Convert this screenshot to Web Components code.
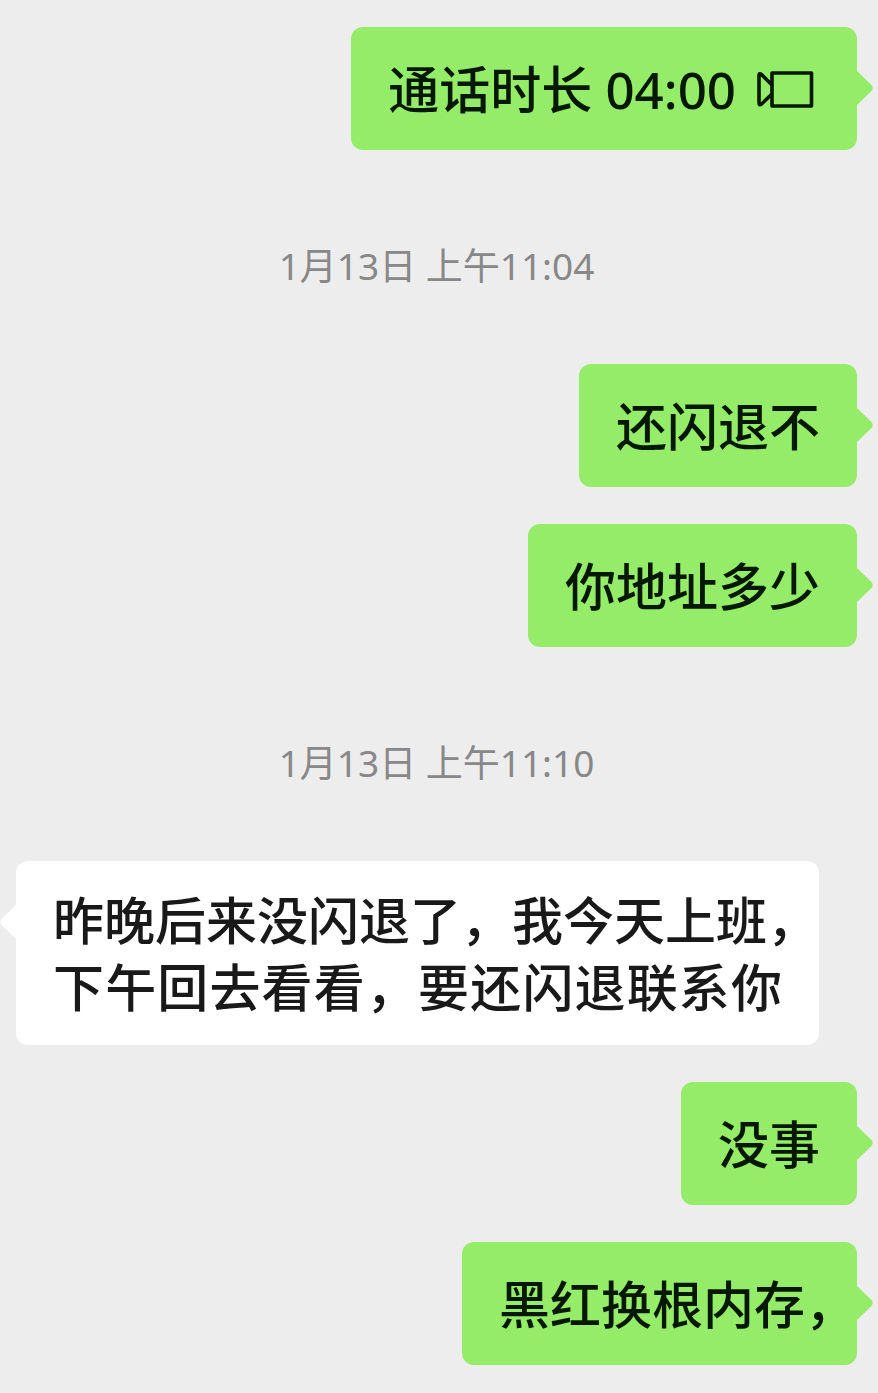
<!DOCTYPE html>
<html lang="zh-CN">
<head>
<meta charset="utf-8">
<meta name="viewport" content="width=device-width, initial-scale=1">
<title>聊天</title>
<style>
  body {
    margin: 0;
    background: #ededed;
    font-family: "Noto Sans", "Noto Sans CJK SC", sans-serif;
  }
  /* a comma that closes a line takes only the room of its ink */
  .line-end {
    display: inline-block;
    width: 15px;
    white-space: nowrap;
    text-align: left;
    text-align-last: left;
  }
</style>
</head>
<body>
<chat-log>
  <chat-message side="right">通话时长 04:00<video-icon></video-icon></chat-message>
  <chat-time>1月13日 上午11:04</chat-time>
  <chat-message side="right">还闪退不</chat-message>
  <chat-message side="right">你地址多少</chat-message>
  <chat-time>1月13日 上午11:10</chat-time>
  <chat-message side="left">昨晚后来没闪退了，我今天上班<span class="line-end">，</span><br>下午回去看看，要还闪退联系你</chat-message>
  <chat-message side="right">没事</chat-message>
  <chat-message side="right">黑红换根内存<span class="line-end">，</span></chat-message>
</chat-log>

<script>
class ChatLog extends HTMLElement {
  constructor() {
    super();
    this.attachShadow({ mode: 'open' });
  }

  connectedCallback() {
    this.shadowRoot.innerHTML = `
      <style>
        :host {
          display: flex;
          flex-direction: column;
          gap: 37px;
          box-sizing: border-box;
          min-height: 100vh;
          padding: 27px 21px 28px 16px;
        }
      </style>
      <slot></slot>
    `;
  }
}

class ChatTime extends HTMLElement {
  constructor() {
    super();
    this.attachShadow({ mode: 'open' });
  }

  connectedCallback() {
    this.shadowRoot.innerHTML = `
      <style>
        :host {
          display: block;
          padding: 53px 0 35px;
          color: #888;
          font-size: 37px;
          line-height: 52px;
          text-align: center;
        }
      </style>
      <slot></slot>
    `;
  }
}

class ChatMessage extends HTMLElement {
  constructor() {
    super();
    this.attachShadow({ mode: 'open' });
  }

  static get observedAttributes() {
    return ['side'];
  }

  attributeChangedCallback() {
    this.render();
  }

  connectedCallback() {
    this.render();
  }

  render() {
    this.shadowRoot.innerHTML = `
      <style>
        :host {
          --bubble: #fff;
          display: flex;
          color: #191919;
        }
        :host([side="right"]) {
          --bubble: #95ec69;
          justify-content: flex-end;
          color: #061800;
        }
        .bubble {
          position: relative;
          display: flex;
          align-items: center;
          box-sizing: border-box;
          min-height: 123px;
          padding: 26px 37px 24px;
          border-radius: 12px;
          background: var(--bubble);
        }
        .text {
          font-size: 51px;
          font-weight: 500;
          line-height: 67px;
          text-align: justify;
          text-align-last: justify;
        }
        .tail {
          position: absolute;
          top: 44px;
          right: 100%;
          width: 16px;
          height: 34px;
          fill: var(--bubble);
        }
        :host([side="right"]) .tail {
          right: auto;
          left: 100%;
          transform: scaleX(-1);
        }
      </style>
      <div class="bubble">
        <svg class="tail" viewBox="0 0 16 34" aria-hidden="true">
          <path d="M16 0 1.500 14Q-1 17 1.500 20L16 34Z"/>
        </svg>
        <div class="text"><slot></slot></div>
      </div>
    `;
  }
}

class VideoIcon extends HTMLElement {
  constructor() {
    super();
    this.attachShadow({ mode: 'open' });
  }

  connectedCallback() {
    this.shadowRoot.innerHTML = `
      <style>
        :host {
          display: inline-block;
          margin: 0 6px 0 21px;
        }
        svg {
          display: block;
          width: 57px;
          height: 38px;
          fill: none;
          stroke: currentColor;
          stroke-width: 3.600;
          stroke-linejoin: round;
        }
      </style>
      <svg viewBox="0 0 57 38" aria-hidden="true">
        <rect x="15" y="2" width="39.500" height="33"/>
        <path d="M15 14 4.500 3.500Q2 1.500 2 4.500V31.500Q2 35 4.500 33L15 23"/>
      </svg>
    `;
  }
}

customElements.define('chat-log', ChatLog);
customElements.define('chat-time', ChatTime);
customElements.define('chat-message', ChatMessage);
customElements.define('video-icon', VideoIcon);
</script>
</body>
</html>
